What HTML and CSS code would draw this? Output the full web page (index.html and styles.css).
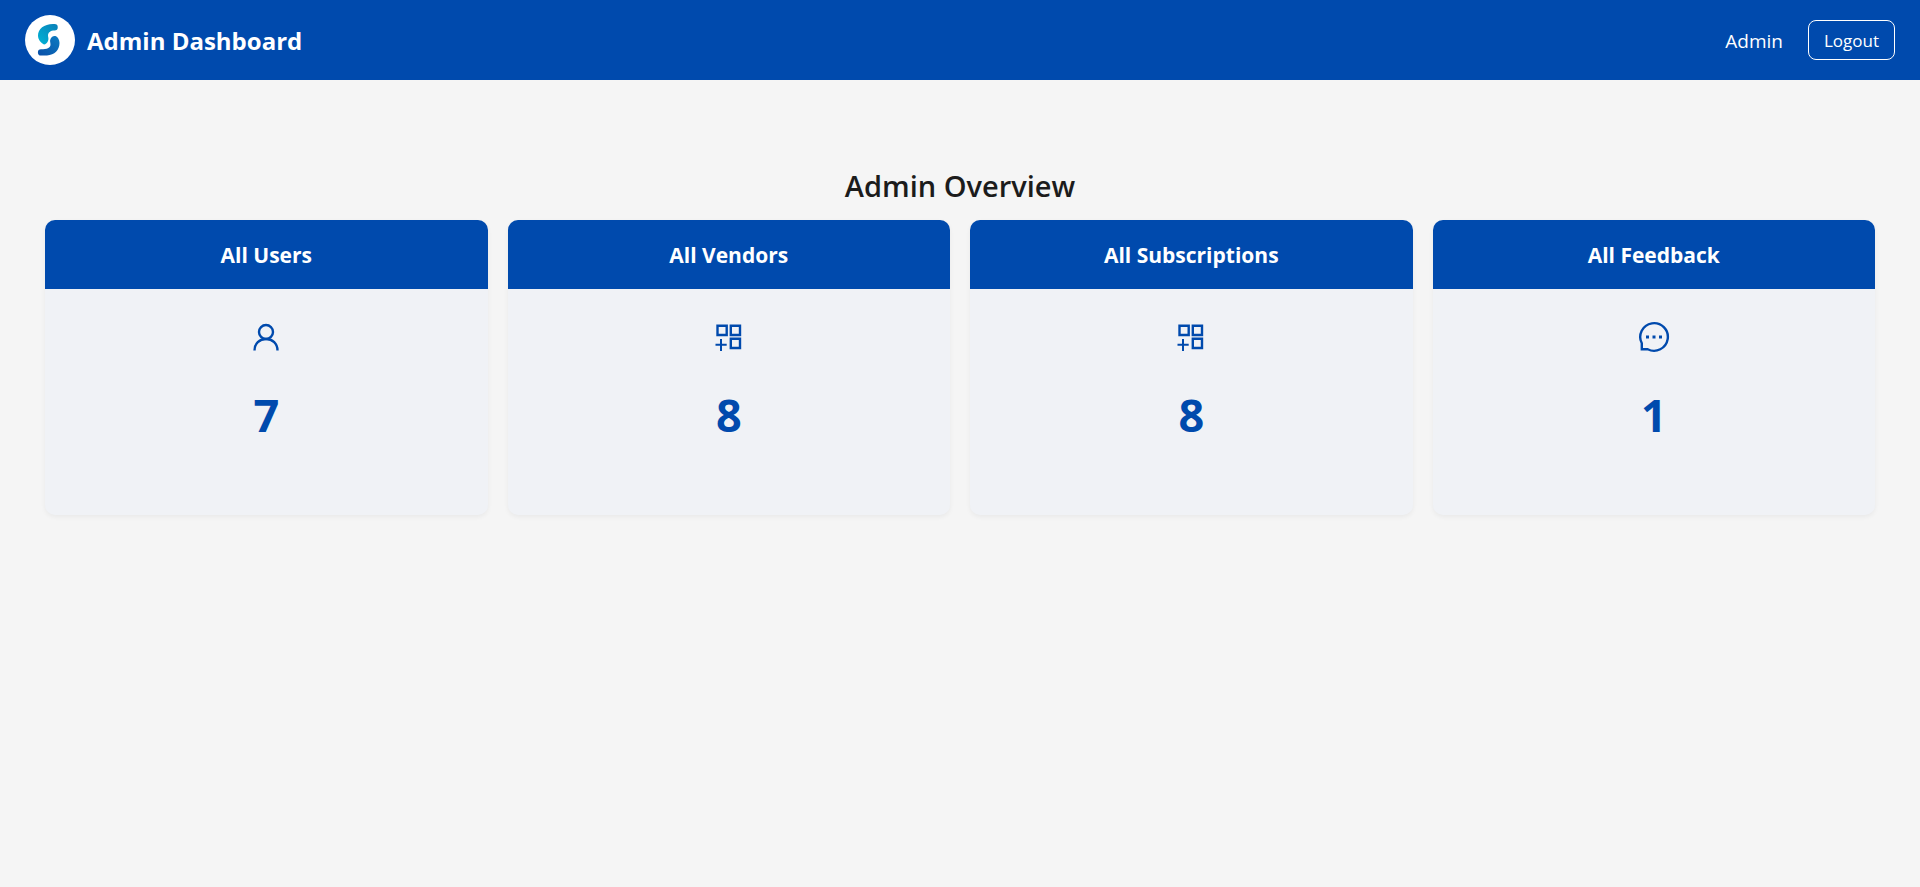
FILE: index.html
```html
<!DOCTYPE html>
<html lang="en">
<head>
  <meta charset="utf-8">
  <meta name="viewport" content="width=device-width, initial-scale=1">
  <title>Admin Dashboard</title>
  <link rel="stylesheet" href="styles.css">
</head>
<body>
  <header class="topbar">
    <div class="brand">
      <svg class="logo" viewBox="0 0 50 50" aria-hidden="true">
        <defs>
          <linearGradient id="teal" x1="0" y1="1" x2="1" y2="0">
            <stop offset="0" stop-color="#00b4d6"/>
            <stop offset="1" stop-color="#0a7fb8"/>
          </linearGradient>
          <linearGradient id="blue" x1="0" y1="1" x2="1" y2="0">
            <stop offset="0" stop-color="#0a4fa8"/>
            <stop offset="1" stop-color="#0b7cc2"/>
          </linearGradient>
        </defs>
        <circle cx="25" cy="25" r="25" fill="#fff"/>
        <path d="M28 9H29.500A3 3 0 0 1 29.500 15.500C25.500 15.500 23 17.500 23 20.500C23 22.500 24 23.500 23 26C22 28 20.500 29.500 19 29.500C16 28 13 24.500 13 20.500C13 14 19 9 28 9Z" fill="url(#teal)"/>
        <path d="M22 40.500H16A3 3 0 0 1 16 34.300C22 34.300 25.500 33 25.500 29.500C25.500 27 24.500 26.500 25.500 24C26.500 21.500 28.500 20.500 30.500 21C33 22 34.500 25 34.500 28C34.500 35 29.500 40 22 40.500Z" fill="url(#blue)"/>
      </svg>
      <h1 class="brand-name">Admin Dashboard</h1>
    </div>
    <div class="account">
      <span class="account-name">Admin</span>
      <button class="logout" type="button">Logout</button>
    </div>
  </header>

  <main class="overview">
    <h2 class="overview-title">Admin Overview</h2>
    <div class="cards">
      <section class="card">
        <h3 class="card-title">All Users</h3>
        <div class="card-body">
          <svg class="icon" viewBox="0 0 32 32" aria-hidden="true">
            <circle cx="16" cy="11" r="7"/>
            <path d="M4.500 29.500C4.500 22.500 9.500 18 16 18S27.500 22.500 27.500 29.500"/>
          </svg>
          <p class="count">7</p>
        </div>
      </section>
      <section class="card">
        <h3 class="card-title">All Vendors</h3>
        <div class="card-body">
          <svg class="icon" viewBox="0 0 32 32" aria-hidden="true">
            <path d="M4.500 4.800H13.700V14H4.500ZM17.800 4.800H27V14H17.800ZM17.800 17.800H27V27H17.800Z"/>
            <path d="M2.500 23.800H13.700M8 18V30" stroke-width="2"/>
          </svg>
          <p class="count">8</p>
        </div>
      </section>
      <section class="card">
        <h3 class="card-title">All Subscriptions</h3>
        <div class="card-body">
          <svg class="icon" viewBox="0 0 32 32" aria-hidden="true">
            <path d="M4.500 4.800H13.700V14H4.500ZM17.800 4.800H27V14H17.800ZM17.800 17.800H27V27H17.800Z"/>
            <path d="M2.500 23.800H13.700M8 18V30" stroke-width="2"/>
          </svg>
          <p class="count">8</p>
        </div>
      </section>
      <section class="card">
        <h3 class="card-title">All Feedback</h3>
        <div class="card-body">
          <svg class="icon" viewBox="0 0 32 32" aria-hidden="true">
            <path d="M3.800 22.300A13.800 13.800 0 1 1 9.700 28.200H3.800Z"/>
            <path class="dots" d="M8 14.500H11V17.500H8ZM14.500 14.500H17.500V17.500H14.500ZM21 14.500H24V17.500H21Z"/>
          </svg>
          <p class="count">1</p>
        </div>
      </section>
    </div>
  </main>
</body>
</html>
```
FILE: styles.css
```css
* {
  box-sizing: border-box;
}

body {
  margin: 0;
  background: #f5f5f5;
  color: #1c1c1c;
  font-family: "Segoe UI", "Open Sans", "Noto Sans", sans-serif;
}

h1, h2, h3, p {
  margin: 0;
}

.topbar {
  display: flex;
  align-items: center;
  justify-content: space-between;
  height: 80px;
  padding: 0 25px;
  background: #004aad;
  color: #fff;
}

.brand {
  display: flex;
  align-items: center;
  gap: 12px;
}

.logo {
  width: 50px;
  height: 50px;
}

.brand-name {
  padding-top: 2px;
  font-size: 24px;
  font-weight: 700;
  line-height: 32px;
}

.account {
  display: flex;
  align-items: center;
  gap: 25px;
}

.account-name {
  padding-top: 2px;
  font-size: 19px;
  line-height: 28px;
}

.logout {
  height: 40px;
  padding: 0 15px;
  border: 1px solid #fff;
  border-radius: 8px;
  background: transparent;
  color: #fff;
  font: inherit;
  font-size: 17px;
  cursor: pointer;
}

.overview {
  padding: 86px 45px 40px;
}

.overview-title {
  margin-bottom: 14px;
  font-size: 29px;
  font-weight: 600;
  line-height: 40px;
  text-align: center;
}

.cards {
  display: grid;
  grid-template-columns: repeat(4, 1fr);
  gap: 20px;
}

.card {
  overflow: hidden;
  border-radius: 10px;
  background: #f0f2f6;
  box-shadow: 0 2px 5px rgba(0, 0, 0, 0.05);
  text-align: center;
}

.card-title {
  padding: 21px 20px 19px;
  background: #004aad;
  color: #fff;
  font-size: 21px;
  font-weight: 700;
  line-height: 29px;
}

.card-body {
  display: flex;
  flex-direction: column;
  align-items: center;
  gap: 32px;
  padding: 32px 20px 70px;
  color: #004aad;
}

.icon {
  width: 32px;
  height: 32px;
  fill: none;
  stroke: currentColor;
  stroke-width: 2.4;
}

.icon .dots {
  fill: currentColor;
  stroke: none;
}

.count {
  font-size: 45px;
  font-weight: 700;
  line-height: 60px;
}
```
